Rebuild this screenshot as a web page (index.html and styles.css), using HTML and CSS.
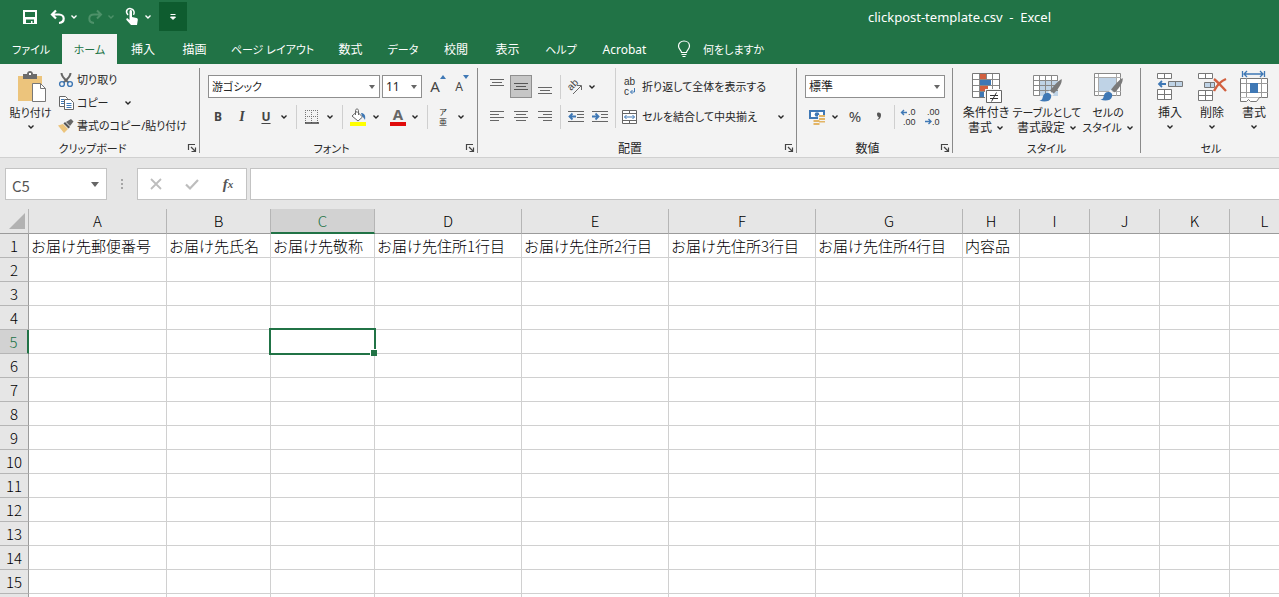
FILE: index.html
```
<!DOCTYPE html>
<html lang="ja">
<head>
    <meta charset="UTF-8">
    <meta name="viewport" content="width=device-width, initial-scale=1.0">
    <title>clickpost-template.csv - Excel</title>
    <link rel="stylesheet" href="styles.css">
</head>
<body>
<svg class="defs" aria-hidden="true">
    <symbol id="chev" viewBox="0 0 8 8"><path d="M1.500 2.500 4 5l2.500-2.500" fill="none" stroke="currentColor" stroke-width="1.400"/></symbol>
    <symbol id="launch" viewBox="0 0 10 10"><path d="M1.500 7V1.500H8M4 4l4 4M8.500 4.500v4h-4" fill="none" stroke="#444" stroke-width="1.200"/></symbol>
    <symbol id="brush" viewBox="0 0 24 26"><path d="M23 1c1 4-3 10-8 15l-4-3C15 8 19 3 23 1z" fill="#7a7a7a"/><path d="M10 13l5 4-2 2-4-4z" fill="#f3f3f3"/><path d="M8 15.500c3 0 5 2 4 5-1 4-7 5-12 3 3-.5 3-2 3.500-4 .5-2.500 2-4 4.500-4z" fill="#3f78b5"/></symbol>
</svg>

<header class="titlebar">
    <div class="quick">
        <button class="q-save" aria-label="上書き保存"><svg width="16" height="16" viewBox="0 0 16 16"><path d="M1 1h14v14H1z" fill="#fff"/><path d="M3 3h10v5H3zM4 10.500h8V14h-1.500v-2H9v2H4z" fill="#217346"/></svg></button>
        <button class="q-icon" aria-label="元に戻す"><svg width="16" height="16" viewBox="0 0 16 16"><path d="M6 1.500 2 5.500l4 4M2.500 5.500H9c6 0 6.500 8 0 8.500" fill="none" stroke="#fff" stroke-width="2.200"/></svg></button>
        <button class="drop" aria-label="元に戻す一覧"><svg class="chev"><use href="#chev"/></svg></button>
        <button class="q-icon dim" aria-label="やり直し"><svg width="16" height="16" viewBox="0 0 16 16"><path d="M10 1.500l4 4-4 4M13.500 5.500H7c-6 0-6.500 8 0 8.500" fill="none" stroke="currentColor" stroke-width="2"/></svg></button>
        <button class="drop dim" aria-label="やり直し一覧"><svg class="chev"><use href="#chev"/></svg></button>
        <button class="q-icon" aria-label="タッチ/マウス モード"><svg width="14" height="18" viewBox="0 0 14 18"><path d="M4.500 3.500c0-2 2.500-2 2.500 0V9l4.500 1c1 .3 1.500 1 1.300 2L12 17H6L1.500 12c-.8-1.200.6-2.200 1.600-1.300L4.500 12z" fill="#fff"/><path d="M3 7C-.5 3 3-.2 6 .8c3 .7 4 3.700 2.500 6" fill="none" stroke="#fff" stroke-width="1.500"/></svg></button>
        <button class="drop" aria-label="モード一覧"><svg class="chev"><use href="#chev"/></svg></button>
        <button class="customize" aria-label="クイック アクセス ツール バーのカスタマイズ"><svg width="8" height="8" viewBox="0 0 8 8"><path d="M1.500 1.500h5M1.500 4h5L4 6.500z" fill="#fff" stroke="#fff"/></svg></button>
    </div>
    <div class="title">clickpost-template.csv &nbsp;-&nbsp; Excel</div>
</header>

<nav class="tabs">
    <a href="#" class="kana">ファイル</a>
    <a href="#" class="kana active">ホーム</a>
    <a href="#">挿入</a>
    <a href="#">描画</a>
    <a href="#" class="kana">ページ レイアウト</a>
    <a href="#">数式</a>
    <a href="#" class="kana">データ</a>
    <a href="#">校閲</a>
    <a href="#">表示</a>
    <a href="#" class="kana">ヘルプ</a>
    <a href="#">Acrobat</a>
    <a href="#" class="kana tell"><svg width="14" height="18" viewBox="0 0 14 18"><path d="M4.500 12.500c0-2-3-3-3-6.500C1.500 3 4 1 7 1s5.500 2 5.500 5c0 3.500-3 4.500-3 6.500zM4.500 14.500h5M5.500 16.500h3" fill="none" stroke="#fff" stroke-width="1.200"/></svg>何をしますか</a>
</nav>

<main class="ribbon">
    <section class="group clipboard">
        <div class="group-body">
            <button class="big kana">
                <svg width="32" height="32" viewBox="0 0 32 32"><path d="M3 5h24v25H3z" fill="#ecc47c"/><path d="M8 3h4c0-4 6-4 6 0h4v5H8z" fill="#6b6b6b"/><path d="M14 2h2v2h-2z" fill="#fff"/><path d="M17.500 12.500h8l5 5v13h-13z" fill="#fff" stroke="#777"/><path d="M25.500 12.500v5h5" fill="none" stroke="#777"/></svg>
                <span>貼り付け</span>
                <svg class="chev"><use href="#chev"/></svg>
            </button>
            <div class="clip-list">
                <button class="kana"><svg width="16" height="16" viewBox="0 0 16 16"><path d="M3.500 1c0 4 3 6 7 9.500M12.500 1c0 4-3 6-7 9.500" fill="none" stroke="#666" stroke-width="2"/><circle cx="4" cy="12" r="2.400" fill="none" stroke="#3f78b5" stroke-width="1.400"/><circle cx="12" cy="12" r="2.400" fill="none" stroke="#3f78b5" stroke-width="1.400"/></svg>切り取り</button>
                <button class="kana"><svg width="16" height="16" viewBox="0 0 16 16"><path d="M1.500 1.500h6l2 2v8h-8z" fill="#fff" stroke="#666"/><path d="M3 4.500h3M3 6.500h3M3 8.500h3" stroke="#3f78b5"/><path d="M6.500 4.500h6l3 3v7h-9z" fill="#fff" stroke="#666"/><path d="M8.500 8.500h5M8.500 10.500h5M8.500 12.500h5" stroke="#3f78b5"/></svg>コピー<svg class="chev copy-chev"><use href="#chev"/></svg></button>
                <button class="kana"><svg width="16" height="16" viewBox="0 0 16 16"><path d="M8 4l4 4 3.500-4.500L13 1z" fill="#666"/><path d="M7 4l5 5-1.500 1.500-5-5z" fill="#555"/><path d="M5 6l5 5-4 4L0 7.500z" fill="#ecc47c"/></svg>書式のコピー/貼り付け</button>
            </div>
        </div>
        <footer class="kana"><span>クリップボード</span><button aria-label="クリップボードの設定"><svg width="10" height="10"><use href="#launch"/></svg></button></footer>
    </section>

    <section class="group font">
        <div class="group-body rows">
            <div class="row">
                <span class="combo combo-font"><select class="kana" aria-label="フォント"><option>游ゴシック</option></select></span>
                <span class="combo combo-size"><select aria-label="フォント サイズ"><option>11</option></select></span>
                <button class="icon grow" aria-label="フォント サイズの拡大">A<svg width="6" height="4" viewBox="0 0 6 4"><path d="M0 4l3-4 3 4z" fill="#3f78b5"/></svg></button>
                <button class="icon shrink" aria-label="フォント サイズの縮小">A<svg width="6" height="4" viewBox="0 0 6 4"><path d="M0 0l3 4 3-4z" fill="#3f78b5"/></svg></button>
            </div>
            <div class="row">
                <button class="icon bold">B</button>
                <button class="icon italic">I</button>
                <button class="icon underline">U</button>
                <button class="drop" aria-label="下線の種類"><svg class="chev"><use href="#chev"/></svg></button>
                <span class="sep"></span>
                <button class="icon" aria-label="罫線"><svg width="14" height="14" viewBox="0 0 14 14"><path d="M0 .5h14M0 6.500h14M.5 0v13M6.500 0v13M12.500 0v13" fill="none" stroke="#777" stroke-dasharray="1 1"/><path d="M0 13h14" stroke="#333" stroke-width="1.400"/></svg></button>
                <button class="drop" aria-label="罫線の一覧"><svg class="chev"><use href="#chev"/></svg></button>
                <span class="sep"></span>
                <button class="icon" aria-label="塗りつぶしの色"><svg width="16" height="18" viewBox="0 0 16 18"><path d="M7 3.500 12.500 9 8 13 2 8z" fill="#fff" stroke="#666"/><path d="M5.500 7V2.500c0-2 3-2 3 0V7" fill="none" stroke="#666"/><path d="M11 5c3 0 5 2 4 7-1-2-2-3-3-4z" fill="#3f78b5"/><path d="M0 14h16v4H0z" fill="#ff0"/></svg></button>
                <button class="drop" aria-label="塗りつぶしの色の一覧"><svg class="chev"><use href="#chev"/></svg></button>
                <button class="font-color" aria-label="フォントの色">A</button>
                <button class="drop" aria-label="フォントの色の一覧"><svg class="chev"><use href="#chev"/></svg></button>
                <span class="sep"></span>
                <button class="icon ruby" aria-label="ふりがなの表示"><span>ア</span><span>亜</span></button>
                <button class="drop" aria-label="ふりがなの一覧"><svg class="chev"><use href="#chev"/></svg></button>
            </div>
        </div>
        <footer class="kana"><span>フォント</span><button aria-label="フォントの設定"><svg width="10" height="10"><use href="#launch"/></svg></button></footer>
    </section>

    <section class="group align">
        <div class="group-body">
            <div class="rows align-left">
                <div class="row">
                    <button class="icon" aria-label="上揃え"><svg width="14" height="18" viewBox="0 0 14 18"><path d="M0 1.500h14M2 4.500h10M0 7.500h14" stroke="#666"/></svg></button>
                    <button class="icon pressed" aria-label="上下中央揃え"><svg width="14" height="18" viewBox="0 0 14 18"><path d="M0 5.500h14M2 8.500h10M0 11.500h14" stroke="#555"/></svg></button>
                    <button class="icon" aria-label="下揃え"><svg width="14" height="18" viewBox="0 0 14 18"><path d="M0 9.500h14M2 12.500h10M0 15.500h14" stroke="#666"/></svg></button>
                    <span class="sep"></span>
                    <button class="icon orient" aria-label="方向"><svg width="18" height="18" viewBox="0 0 18 18"><text transform="translate(5 13) rotate(-45)" font-size="10" fill="#444">ab</text><path d="M7 16 15 8M11 7.500h4.500V12" fill="none" stroke="#666"/></svg></button>
                    <button class="drop" aria-label="方向の一覧"><svg class="chev"><use href="#chev"/></svg></button>
                </div>
                <div class="row">
                    <button class="icon" aria-label="左揃え"><svg width="14" height="14" viewBox="0 0 14 14"><path d="M0 1.500h14M0 4.500h9M0 7.500h14M0 10.500h9" stroke="#666"/></svg></button>
                    <button class="icon" aria-label="中央揃え"><svg width="14" height="14" viewBox="0 0 14 14"><path d="M0 1.500h14M2 4.500h10M0 7.500h14M2 10.500h10" stroke="#666"/></svg></button>
                    <button class="icon" aria-label="右揃え"><svg width="14" height="14" viewBox="0 0 14 14"><path d="M0 1.500h14M5 4.500h9M0 7.500h14M5 10.500h9" stroke="#666"/></svg></button>
                    <span class="sep"></span>
                    <button class="icon" aria-label="インデントを減らす"><svg width="16" height="14" viewBox="0 0 16 14"><path d="M0 1.500h16M9 4.500h7M9 7.500h7M0 11.500h16" stroke="#666"/><path d="M8 6.500H2M4.500 3.500l-3 3 3 3" fill="none" stroke="#3f78b5" stroke-width="1.800"/></svg></button>
                    <button class="icon" aria-label="インデントを増やす"><svg width="16" height="14" viewBox="0 0 16 14"><path d="M0 1.500h16M9 4.500h7M9 7.500h7M0 11.500h16" stroke="#666"/><path d="M0 6.500h6M3.500 3.500l3 3-3 3" fill="none" stroke="#3f78b5" stroke-width="1.800"/></svg></button>
                </div>
            </div>
            <div class="rows align-right">
                <div class="row">
                    <button class="labelled kana"><svg width="16" height="20" viewBox="0 0 16 20"><text x="2" y="8" font-size="10" fill="#333">ab</text><text x="2" y="18" font-size="10" fill="#333">c</text><path d="M12.500 11v4H8.500M10.500 13l-2 2 2 2" fill="none" stroke="#3f78b5"/></svg>折り返して全体を表示する</button>
                </div>
                <div class="row">
                    <button class="labelled kana"><svg width="16" height="16" viewBox="0 0 16 16"><path d="M.5 1.500h14v13H.5zM.5 4.500h14M.5 11.500h14M7.500 1v3M7.500 12v3" fill="#fff" stroke="#666"/><path d="M2.500 8h10M4.500 6l-2 2 2 2M10.500 6l2 2-2 2" fill="none" stroke="#3f78b5"/></svg>セルを結合して中央揃え</button>
                    <button class="drop merge-drop" aria-label="結合の一覧"><svg class="chev"><use href="#chev"/></svg></button>
                </div>
            </div>
        </div>
        <footer><span>配置</span><button aria-label="配置の設定"><svg width="10" height="10"><use href="#launch"/></svg></button></footer>
    </section>

    <section class="group number">
        <div class="group-body rows">
            <div class="row">
                <span class="combo combo-number"><select aria-label="数値の書式"><option>標準</option></select></span>
            </div>
            <div class="row">
                <button class="icon" aria-label="通貨表示形式"><svg width="18" height="18" viewBox="0 0 18 18"><path d="M1 2h16v9H1z" fill="#3f78b5"/><path d="M3 4h12v5H3z" fill="#fff"/><circle cx="9" cy="6.500" r="2.300" fill="#3f78b5"/><path d="M10 7h8v10H5v-6h5z" fill="#f3f3f3"/><path d="M11 7h6v2h-6zM11 10h6v2h-6zM11 13h6v1.500h-6zM5.500 12h6v2h-6zM5.500 15h6v2h-6z" fill="#e3b566"/></svg></button>
                <button class="drop" aria-label="通貨の一覧"><svg class="chev"><use href="#chev"/></svg></button>
                <button class="icon percent">%</button>
                <button class="icon comma" aria-label="桁区切り"><svg width="6" height="10" viewBox="0 0 6 10"><path d="M1 2c0-2 4-2 4 1 0 3-1.500 4.500-4 5 1-1 2-2 1.800-3C1.500 5 1 3.500 1 2z" fill="#555"/></svg></button>
                <span class="sep"></span>
                <button class="icon" aria-label="小数点以下の表示桁数を増やす"><svg width="18" height="20" viewBox="0 0 18 20"><path d="M7 5.500H1.500M4 3 1.500 5.500 4 8" fill="none" stroke="#3f78b5" stroke-width="1.400"/><text x="8" y="8" font-size="9" fill="#333">.0</text><text x="3" y="18" font-size="9" fill="#333">.00</text></svg></button>
                <button class="icon" aria-label="小数点以下の表示桁数を減らす"><svg width="18" height="20" viewBox="0 0 18 20"><path d="M1 14.500h6M4.500 12 7 14.500 4.500 17" fill="none" stroke="#3f78b5" stroke-width="1.400"/><text x="3" y="8" font-size="9" fill="#333">.00</text><text x="8" y="18" font-size="9" fill="#333">.0</text></svg></button>
            </div>
        </div>
        <footer><span>数値</span><button aria-label="数値の設定"><svg width="10" height="10"><use href="#launch"/></svg></button></footer>
    </section>

    <section class="group styles">
        <div class="group-body">
            <button class="big">
                <svg width="32" height="32" viewBox="0 0 32 32"><path d="M2.500 2.500h27v24h-27z" fill="#fff" stroke="#777"/><path d="M10 3h6v5h-6zM10 15h8v5h-8z" fill="#d2603f"/><path d="M10 9h11v5H10zM10 21h4v5h-4z" fill="#3f78b5"/><path d="M3 8.500h26M3 14.500h26M3 20.500h26M9.500 3v23M22.500 3v23M16.500 3v5" stroke="#888"/><path d="M15 18h17v14H15z" fill="#f3f3f3"/><path d="M16.500 19.500h15v12h-15z" fill="#fff" stroke="#666"/><path d="M20 24.500h8M20 27.500h8M26.500 21.500l-5 9" stroke="#333" fill="none"/></svg>
                <span>条件付き</span>
                <span>書式<svg class="chev"><use href="#chev"/></svg></span>
            </button>
            <button class="big">
                <svg width="32" height="32" viewBox="0 0 32 32"><path d="M2.500 4.500h24v20h-24z" fill="#fff" stroke="#888"/><path d="M9 10h18v15H9z" fill="#bfd3e6"/><path d="M3 9.500h24M3 14.500h24M3 19.500h24M8.500 5v20M14.500 5v20M20.500 5v20" fill="none" stroke="#888"/><use href="#brush" x="8" y="7" width="24" height="25"/></svg>
                <span class="kana">テーブルとして</span>
                <span>書式設定<svg class="chev"><use href="#chev"/></svg></span>
            </button>
            <button class="big">
                <svg width="32" height="32" viewBox="0 0 32 32"><path d="M2.500 2.500h26v22h-26z" fill="#fff" stroke="#888"/><path d="M3 6.500h26M3 20.500h26M6.500 3v22M24.500 3v22" stroke="#aaa"/><path d="M7 7h17v13H7z" fill="#bfd3e6"/><use href="#brush" x="8" y="6" width="24" height="25"/></svg>
                <span class="kana">セルの</span>
                <span class="kana">スタイル<svg class="chev"><use href="#chev"/></svg></span>
            </button>
        </div>
        <footer class="kana"><span>スタイル</span></footer>
    </section>

    <section class="group cells">
        <div class="group-body">
            <button class="big">
                <svg width="32" height="32" viewBox="0 0 32 32"><path d="M3.500 2.500h14v5h-14zM10.500 2.500v5M3.500 18.500h14v10h-14zM3.500 23.500h14M10.500 18.500v10" fill="#fff" stroke="#777"/><path d="M14.500 10.500h14v5h-14zM21.500 10.500v5" fill="#bfd3e6" stroke="#777"/><path d="M12 13H5M8 10l-3 3 3 3" fill="none" stroke="#3f78b5" stroke-width="1.800"/></svg>
                <span>挿入</span>
                <svg class="chev"><use href="#chev"/></svg>
            </button>
            <button class="big">
                <svg width="32" height="32" viewBox="0 0 32 32"><path d="M2.500 2.500h14v5h-14zM9.500 2.500v5M2.500 19.500h14v10h-14zM2.500 24.500h14M9.500 19.500v10" fill="#fff" stroke="#777"/><path d="M8.500 11.500h10v5h-10zM14.500 11.500v5" fill="#bfd3e6" stroke="#777"/><path d="M18 8c4 3 8 8 12 12M30 8c-5 2-9 6-12 12" fill="none" stroke="#d2603f" stroke-width="2.400"/></svg>
                <span>削除</span>
                <svg class="chev"><use href="#chev"/></svg>
            </button>
            <button class="big">
                <svg width="32" height="32" viewBox="0 0 32 32"><path d="M4.500 0v6M26.500 0v6M6 3h19M9 0 6 3l3 3M22 0l3 3-3 3" fill="none" stroke="#3f78b5" stroke-width="1.300"/><path d="M2.500 7.500h27v19h-27z" fill="#fff" stroke="#777"/><path d="M3 12.500h27M3 21.500h27M8.500 7v20M23.500 7v20" stroke="#999"/><path d="M12 12h8v10h-8z" fill="#3f78b5"/><path d="M2.500 26.500v4h6l2-2 2 2h6l3-4" fill="#fff" stroke="#777"/></svg>
                <span>書式</span>
                <svg class="chev"><use href="#chev"/></svg>
            </button>
        </div>
        <footer class="kana"><span>セル</span></footer>
    </section>
</main>

<div class="formula-bar">
    <span class="combo name-box"><input type="text" value="C5" aria-label="名前ボックス"></span>
    <span class="grip"><i></i><i></i><i></i></span>
    <div class="fx-buttons">
        <button aria-label="キャンセル"><svg width="14" height="14" viewBox="0 0 14 14"><path d="M2 2l10 10M12 2 2 12" stroke="#bdbdbd" stroke-width="1.800"/></svg></button>
        <button aria-label="入力"><svg width="14" height="14" viewBox="0 0 14 14"><path d="M1 7.500l4 4L13 3" fill="none" stroke="#bdbdbd" stroke-width="2.200"/></svg></button>
        <button class="fx" aria-label="関数の挿入">f<small>x</small></button>
    </div>
    <input class="formula" type="text" aria-label="数式バー">
</div>

<div class="sheet">
    <table>
        <colgroup>
            <col class="w-head"><col class="w-a"><col class="w-b"><col class="w-b">
            <col class="w-addr"><col class="w-addr"><col class="w-addr"><col class="w-addr">
            <col class="w-h"><col class="w-std"><col class="w-std"><col class="w-std"><col class="w-std">
        </colgroup>
        <thead>
            <tr>
                <th class="corner"><svg width="18" height="18" viewBox="0 0 18 18"><path d="M17 1v16H1z" fill="#b2b2b2"/></svg></th>
                <th>A</th><th>B</th><th class="current">C</th><th>D</th><th>E</th><th>F</th><th>G</th><th>H</th><th>I</th><th>J</th><th>K</th><th>L</th>
            </tr>
        </thead>
        <tbody id="rows">
            <tr>
                <th>1</th>
                <td>お届け先郵便番号</td><td>お届け先氏名</td><td>お届け先敬称</td>
                <td>お届け先住所1行目</td><td>お届け先住所2行目</td><td>お届け先住所3行目</td><td>お届け先住所4行目</td>
                <td>内容品</td><td></td><td></td><td></td><td></td>
            </tr>
        </tbody>
    </table>
</div>

<script>
    const rows = document.getElementById('rows');
    const columnCount = 12;
    const active = { row: 5, col: 3 };

    for (let r = 2; r <= 16; r++) {
        const tr = document.createElement('tr');
        const th = document.createElement('th');
        th.textContent = r;
        if (r === active.row) th.className = 'current';
        tr.appendChild(th);
        for (let c = 1; c <= columnCount; c++) {
            const td = document.createElement('td');
            if (r === active.row && c === active.col) td.className = 'selected';
            tr.appendChild(td);
        }
        rows.appendChild(tr);
    }
</script>
</body>
</html>
```
FILE: styles.css
```
* { box-sizing: border-box; }
body { margin: 0; height: 100vh; overflow: hidden; display: flex; flex-direction: column; background: #e6e6e6; color: #262626; font-family: "Noto Sans", "Noto Sans CJK JP", sans-serif; font-size: 12px; line-height: 15px; font-feature-settings: "palt"; }
button { display: flex; flex-shrink: 0; align-items: center; justify-content: center; padding: 0; border: 0; background: none; color: inherit; font: inherit; font-feature-settings: inherit; white-space: nowrap; }
svg { flex-shrink: 0; overflow: visible; }
svg text { font-family: "Liberation Sans", sans-serif; }
select, input { font: inherit; font-feature-settings: inherit; color: inherit; }
.defs { position: absolute; width: 0; height: 0; }
.chev { width: 8px; height: 8px; }
.drop { width: 12px; height: 23px; }
.kana { font-size: 11px; }

/* title bar */
.titlebar { display: flex; flex-shrink: 0; height: 34px; background: #217346; color: #fff; }
.quick { display: flex; align-items: center; height: 33px; padding-left: 16px; }
.q-save { width: 27px; height: 29px; }
.q-icon { width: 20px; height: 29px; margin-left: 5px; }
.dim { color: #4d9169; }
.customize { width: 28px; height: 29px; margin-left: 5px; background: #0e5c2f; }
.title { margin-left: auto; padding: 10px 228px 0 0; font-size: 13px; white-space: nowrap; }

/* tabs */
.tabs { display: grid; flex-shrink: 0; grid-template-columns: 62px 55px 52px 51px 105px 51px 54px 52px 51px 56px 71px auto; height: 30px; background: #217346; }
.tabs a { display: flex; align-items: center; justify-content: center; color: #fff; text-decoration: none; white-space: nowrap; }
.tabs .active { background: #f3f3f3; color: #217346; }
.tabs .tell { justify-content: flex-start; gap: 12px; padding-left: 17px; }

/* ribbon */
.ribbon { display: flex; flex-shrink: 0; height: 94px; padding: 4px 0; background: #f3f3f3; border-bottom: 1px solid #d0d0d0; overflow: hidden; }
.group { display: flex; flex-direction: column; flex-shrink: 0; border-right: 1px solid #8a8a8a; }
.group:last-child { flex-grow: 1; border-right: 0; }
.group-body { display: flex; flex-shrink: 0; height: 72px; }
.group footer { display: flex; flex-shrink: 0; align-items: center; height: 13px; padding-top: 3px; }
.group footer span { flex-grow: 1; text-align: center; }
.group footer button { width: 14px; height: 10px; }
.rows { display: flex; flex-direction: column; gap: 7px; padding-top: 7px; }
.row { display: flex; flex-shrink: 0; align-items: center; height: 23px; }
.icon { width: 24px; height: 23px; }
.sep { flex-shrink: 0; width: 1px; height: 24px; margin: 0 3px 0 6px; background: #cfcfcf; }
.pressed { width: 22px; margin: 0 1px; background: #c6c6c6; border: 1px solid #8f8f8f; }

.combo { position: relative; display: block; flex-shrink: 0; height: 23px; background: #fff; border: 1px solid #8f8f8f; }
.combo::after { content: ""; position: absolute; right: 4px; top: 9px; border: 3px solid transparent; border-top: 4px solid #666; border-bottom: 0; pointer-events: none; }
.combo select { display: block; width: 100%; height: 21px; padding: 0 3px; border: 0; background: none; appearance: none; }
.combo-font { width: 172px; margin-right: 2px; }
.combo-size { width: 40px; margin-right: 4px; }
.combo-number { width: 140px; }

.big { flex-direction: column; justify-content: flex-start; padding-top: 3px; }
.big > svg:first-child { margin-bottom: 2px; }
.big span { display: flex; align-items: center; gap: 4px; }
.big > .chev { margin-top: 3px; }

.clipboard { width: 200px; }
.clipboard .big { width: 58px; padding-left: 3px; }
.clip-list { display: flex; flex-direction: column; align-items: flex-start; }
.clip-list button { height: 23px; gap: 3px; }
.copy-chev { margin-left: 12px; }

.font { width: 278px; }
.font .rows { padding-left: 8px; }
.font .row:last-child { margin-left: -2px; }
.grow, .shrink { align-items: flex-start; color: #444; }
.grow { font-size: 15px; line-height: 23px; }
.shrink { font-size: 12px; line-height: 24px; }
.bold { font-weight: bold; color: #444; }
.italic { font-family: "Liberation Serif", serif; font-style: italic; font-weight: bold; font-size: 14px; color: #444; }
.underline { font-weight: bold; text-decoration: underline; text-underline-offset: 2px; color: #444; }
.font-color { width: 16px; height: 18px; margin: 0 3px 0 8px; border-bottom: 4px solid #e00b0b; font-size: 15px; font-weight: bold; color: #666; }
.ruby { flex-direction: column; font-size: 8px; line-height: 10px; }

.align { width: 319px; }
.align-left { flex-shrink: 0; width: 137px; padding-left: 7px; }
.align-left .sep { margin: 0 3px; }
.orient { width: 22px; }
.align-right { padding-left: 6px; border-left: 1px solid #cfcfcf; }
.align .group-body { align-items: flex-start; }
.labelled { gap: 4px; height: 23px; }
.merge-drop { margin-left: 18px; }

.number { width: 156px; }
.number .rows { padding-left: 8px; }
.number .sep { margin: 0 2px 0 3px; }
.percent { margin-left: 2px; font-size: 15px; color: #444; }

.styles { width: 188px; }
.styles .big { width: 66px; }
.styles .big:nth-child(2) { width: 56px; }

.cells .group-body { padding-left: 8px; }
.cells .big { width: 42px; }
.cells footer span { flex-grow: 0; width: 140px; }

/* formula bar */
.formula-bar { display: flex; flex-shrink: 0; height: 51px; padding: 10px 0 9px 5px; }
.formula-bar .combo, .formula, .fx-buttons { height: 32px; background: #fff; border: 1px solid #c3c3c3; }
.name-box { width: 102px; }
.name-box input { width: 80px; height: 30px; padding: 3px 6px 0; border: 0; background: none; font-family: "Noto Sans CJK JP", sans-serif; font-size: 15px; color: #555; }
.formula-bar .combo::after { top: 13px; right: 7px; border-width: 5px 4px 0; }
.grip { display: flex; flex-direction: column; align-items: center; justify-content: center; gap: 2px; width: 30px; }
.grip i { width: 2px; height: 2px; background: #a6a6a6; }
.fx-buttons { display: flex; width: 110px; margin-right: 3px; }
.fx-buttons button { width: 36px; }
.fx { font-family: "Liberation Serif", serif; font-style: italic; font-weight: bold; font-size: 15px; color: #555; }
.fx small { font-size: 11px; }
.formula { flex-grow: 1; min-width: 0; border-right: 0; outline: 0; }

/* sheet */
.sheet { flex-grow: 1; overflow: hidden; background: #fff; font-family: "Noto Sans CJK JP", sans-serif; font-size: 15px; font-weight: 300; font-feature-settings: normal; color: #000; }
table { width: 1300px; table-layout: fixed; border-collapse: separate; border-spacing: 0; }
.w-head { width: 29px; }
.w-a { width: 138px; }
.w-b { width: 104px; }
.w-addr { width: 147px; }
.w-h { width: 57px; }
.w-std { width: 70px; }
th, td { height: 24px; padding: 0; line-height: 22px; white-space: nowrap; border-right: 1px solid #d0d0d0; border-bottom: 1px solid #d0d0d0; }
th { background: #e6e6e6; font-weight: 300; text-align: center; border-color: #b5b5b5; }
thead th { height: 25px; border-bottom-color: #9b9b9b; }
tbody th { border-right-color: #9b9b9b; }
td { position: relative; padding-left: 2px; }
.corner { padding-right: 2px; }
.corner svg { display: block; margin-left: auto; }
.current { background: #d2d2d2; color: #217346; }
thead .current { border-bottom: 2px solid #217346; }
tbody .current { border-right: 2px solid #217346; }
.selected { z-index: 1; }
.selected::before { content: ""; position: absolute; inset: -2px; border: 2px solid #217346; }
.selected::after { content: ""; position: absolute; right: -3px; bottom: -3px; width: 6px; height: 6px; border: 1px solid #fff; border-width: 1px 0 0 1px; background: #217346; }
```
